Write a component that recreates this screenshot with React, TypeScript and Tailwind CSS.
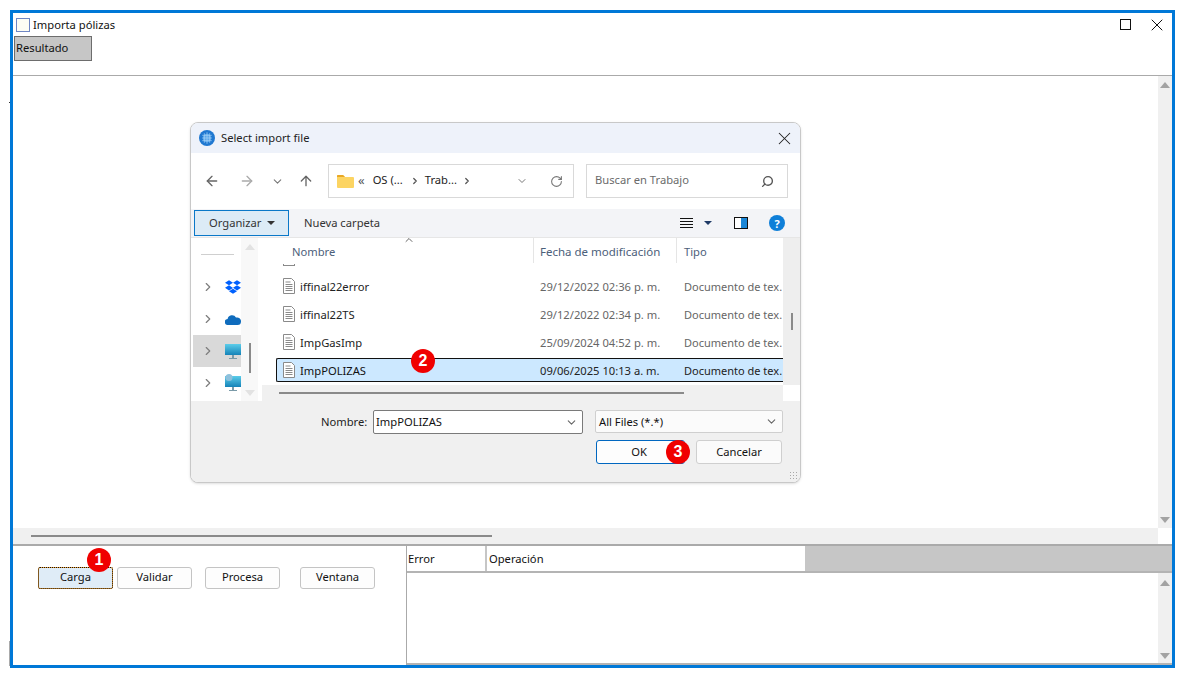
import { ArrowLeft, ArrowRight, ArrowUp, ChevronDown, ChevronRight, ChevronUp, RotateCw, Search, X } from "lucide-react";
import { FaDropbox } from "react-icons/fa";

const files = [
  { name: "iffinal22error", date: "29/12/2022 02:36 p. m." },
  { name: "iffinal22TS", date: "29/12/2022 02:34 p. m." },
  { name: "ImpGasImp", date: "25/09/2024 04:52 p. m." },
];

function Badge({ n, className }: { n: number; className: string }) {
  return (
    <div className={`absolute w-6 h-6 rounded-full bg-[#f00000] text-white text-[16px] font-bold flex items-center justify-center font-['Liberation_Sans',sans-serif] ${className}`}>
      {n}
    </div>
  );
}

function UpTri({ faint }: { faint?: boolean }) {
  return <div className={`w-0 h-0 border-x-[5px] border-x-transparent border-b-[6px] ${faint ? "border-b-[#e2e2e2]" : "border-b-[#a3a3a3]"}`} />;
}

function DownTri({ faint }: { faint?: boolean }) {
  return <div className={`w-0 h-0 border-x-[5px] border-x-transparent border-t-[6px] ${faint ? "border-t-[#e2e2e2]" : "border-t-[#a3a3a3]"}`} />;
}

function DocIcon() {
  return (
    <svg width="14" height="16" viewBox="0 0 14 16" className="shrink-0">
      <path d="M1.5.5h8l3 3v12h-11z" fill="#fff" stroke="#8a8a8a" />
      <path d="M3.5 4h5M3.5 6.5h7M3.5 8.5h7M3.5 10.5h7M3.5 12.5h7" stroke="#8a8a8a" />
    </svg>
  );
}

function Monitor({ net }: { net?: boolean }) {
  return (
    <svg width="16" height="18" viewBox="0 0 16 18" className="shrink-0">
      <defs>
        <linearGradient id="screen" x1="0" y1="0" x2="0" y2="1">
          <stop offset="0" stopColor="#5ccdea" />
          <stop offset="1" stopColor="#1583b8" />
        </linearGradient>
      </defs>
      <rect x="0" y="2" width="16" height="11" fill="url(#screen)" />
      <rect x="7" y="13" width="2" height="3" fill="#7a9aa8" />
      <rect x="4" y="16" width="8" height="1" fill="#7a9aa8" />
      {net && <circle cx="4" cy="3.5" r="3.5" fill="#8fc1dc" />}
    </svg>
  );
}

function NavRow({ children, selected }: { children: React.ReactNode; selected?: boolean }) {
  return (
    <div className={`h-8 flex items-center pl-[8px] gap-[10px] ${selected ? "bg-[#d9d9d9]" : ""}`}>
      <ChevronRight className="w-[14px] h-[14px] text-[#7d7d7d] shrink-0" />
      {children}
    </div>
  );
}

function ActionButton({ label, className }: { label: string; className: string }) {
  return (
    <button className={`w-[75px] h-[22px] pb-[2px] rounded-[3px] border border-[#c4c4c4] bg-[#fdfdfd] text-[#111] ${className}`}>
      {label}
    </button>
  );
}

function FileDialog() {
  return (
    <div className="absolute left-[190px] top-[122px] w-[611px] h-[361px] rounded-[8px] border border-[#c8c8c8] bg-white overflow-hidden flex flex-col shadow-sm">
      {/* title */}
      <div className="h-[30px] shrink-0 bg-[#eef2fa] flex items-center pl-[8px] pr-[5px]">
        <svg width="16" height="16" viewBox="0 0 15 15" className="shrink-0">
          <circle cx="7.5" cy="7.5" r="7.5" fill="#1f78d1" />
          <circle cx="7.5" cy="7.5" r="4" fill="#5aa6ea" />
          <path d="M3 5h9M3 7.5h9M3 10h9M5 3v9M7.5 2v11M10 3v9" stroke="#a8d4f7" strokeWidth=".6" />
        </svg>
        <span className="ml-[6px] text-[#222]">Select import file</span>
        <X className="ml-auto w-[21px] h-[21px] text-[#222]" strokeWidth={1.2} />
      </div>

      {/* navigation */}
      <div className="h-[56px] shrink-0 flex items-center pl-[13px] text-[#555]">
        <ArrowLeft className="w-4 h-4 text-[#666]" />
        <ArrowRight className="w-4 h-4 ml-[19px] text-[#aaa]" />
        <ChevronDown className="w-[13px] h-[13px] ml-[16px] text-[#777]" />
        <ArrowUp className="w-4 h-4 ml-[14px] text-[#666]" />
        <div className="ml-[14px] w-[246px] h-[34px] border border-[#d9d9d9] flex items-center pl-2 pb-[2px] text-[#222]">
          <svg width="17" height="14" viewBox="0 0 17 14" className="shrink-0 mt-[2px]">
            <path d="M0 2a1 1 0 0 1 1-1h5l2 2h8a1 1 0 0 1 1 1v9a1 1 0 0 1-1 1H1a1 1 0 0 1-1-1z" fill="#fcd462" />
            <path d="M0 2a1 1 0 0 1 1-1h5l2 2H0z" fill="#e9a825" />
          </svg>
          <span className="ml-1 text-[#555] text-[13px]">«</span>
          <span className="ml-[8px]">OS (...</span>
          <ChevronRight className="w-[10px] h-[10px] ml-[7px] mt-[2px] text-[#555]" strokeWidth={3} />
          <span className="ml-[5px]">Trab...</span>
          <ChevronRight className="w-[10px] h-[10px] ml-[5px] mt-[2px] text-[#555]" strokeWidth={3} />
          <ChevronDown className="w-[12px] h-[12px] ml-auto mt-[2px] text-[#777]" />
          <RotateCw className="w-[13px] h-[13px] ml-[22px] mr-[10px] mt-[2px] text-[#777]" />
        </div>
        <div className="ml-[12px] w-[202px] h-[34px] border border-[#d9d9d9] flex items-center pl-2 pr-[13px] pb-[2px] text-[#6b6b6b]">
          <span>Buscar en Trabajo</span>
          <Search className="ml-auto w-[13px] h-[13px] mt-[2px] -scale-x-100 text-[#555]" strokeWidth={2.5} />
        </div>
      </div>

      {/* toolbar */}
      <div className="h-[29px] shrink-0 bg-[#f3f4f7] flex items-center pl-[3px] pr-[15px] border-b border-[#e6e6e6]">
        <div className="w-[95px] h-[26px] bg-[#dcebf6] border border-[#0a78c8] flex items-center pl-[14px] text-[#333]">
          Organizar
          <div className="ml-[6px] w-0 h-0 border-x-[4px] border-x-transparent border-t-[4px] border-t-[#333]" />
        </div>
        <span className="ml-[15px] text-[#333]">Nueva carpeta</span>
        <div className="ml-auto w-[13px] flex flex-col gap-[2px]">
          <div className="h-px bg-[#111]" />
          <div className="h-px bg-[#111]" />
          <div className="h-px bg-[#111]" />
          <div className="h-px bg-[#111]" />
        </div>
        <div className="ml-[11px] w-0 h-0 border-x-[4px] border-x-transparent border-t-[4px] border-t-[#1f3a66]" />
        <div className="ml-[22px] w-[14px] h-[12px] border border-[#111] flex">
          <div className="w-1/2 bg-white" />
          <div className="w-1/2 bg-[#1b87d8]" />
        </div>
        <div className="ml-[21px] w-4 h-4 rounded-full bg-[#0f7fd8] text-white text-[11px] font-bold flex items-center justify-center">?</div>
      </div>

      {/* body */}
      <div className="h-[163px] shrink-0 flex">
        <div className="w-[50px] shrink-0 pl-[2px] overflow-hidden">
          <div className="w-[48px] h-[33px] relative">
            <div className="absolute left-[8px] top-[16px] w-[33px] h-px bg-[#cfcfcf]" />
          </div>
          <NavRow><FaDropbox className="w-4 h-4 text-[#0061fe] shrink-0" /></NavRow>
          <NavRow>
            <svg width="16" height="11" viewBox="0 0 16 11" className="shrink-0">
              <path d="M3 11a3 3 0 0 1-.4-6A4.5 4.5 0 0 1 11 3.6 3.8 3.8 0 0 1 16 7.5 3.5 3.5 0 0 1 12.5 11z" fill="#0f6cbd" />
            </svg>
          </NavRow>
          <NavRow selected><Monitor /></NavRow>
          <NavRow><Monitor net /></NavRow>
        </div>
        <div className="w-[17px] shrink-0 bg-[#f8f8f8] flex flex-col items-center pt-[6px] pb-[5px]">
          <UpTri faint />
          <div className="w-[2px] h-[30px] bg-[#8a8a8a] mt-[93px]" />
          <div className="mt-auto"><DownTri faint /></div>
        </div>
        <div className="w-[4px] shrink-0" />
        <div className="w-[521px] shrink-0 flex flex-col">
          <div className="h-[25px] flex shrink-0 relative text-[#4c607a]">
            <div className="w-[272px] pl-[30px] pt-[2px] flex items-center border-r border-[#e5e5e5]">Nombre</div>
            <ChevronUp className="absolute left-[141px] -top-[4px] w-[12px] h-[12px] text-[#666]" />
            <div className="w-[143px] pl-[6px] pt-[2px] flex items-center border-r border-[#e5e5e5] text-[11.5px]">Fecha de modificación</div>
            <div className="pl-[7px] pt-[2px] flex items-center">Tipo</div>
          </div>
          <div className="h-[9px] pl-[21px] overflow-hidden shrink-0">
            <div className="w-[12px] h-[2px] mt-[1px] border-x border-b border-[#8a8a8a]" />
          </div>
          {files.map((f) => (
            <div key={f.name} className="h-[28px] flex items-center shrink-0">
              <div className="w-[20px] shrink-0" />
              <DocIcon />
              <span className="ml-[4px] w-[240px] pt-[1px] text-[#222]">{f.name}</span>
              <span className="w-[144px] pt-[1px] text-[#666]">{f.date}</span>
              <span className="text-[#666] whitespace-nowrap text-[11px]">Documento de tex.</span>
            </div>
          ))}
          <div className="h-[24px] mt-[2px] ml-[14px] flex items-center shrink-0 bg-[#cce8ff] border-y border-l border-[#111] rounded-l-[2px]">
            <div className="w-[5px] shrink-0" />
            <DocIcon />
            <span className="ml-[4px] w-[240px] pt-[1px] text-[#111]">ImpPOLIZAS</span>
            <span className="w-[144px] pt-[1px] text-[#222]">09/06/2025 10:13 a. m.</span>
            <span className="text-[#222] whitespace-nowrap text-[11px]">Documento de tex.</span>
          </div>
          <div className="h-[16px] mt-[3px] shrink-0 bg-[#f0f0f0] pl-[17px] pt-[7px]">
            <div className="w-[405px] h-[2px] bg-[#8a8a8a]" />
          </div>
        </div>
        <div className="w-[17px] shrink-0 bg-[#eeeeee] self-start h-[147px] flex justify-center pt-[75px]">
          <div className="w-[2px] h-[17px] bg-[#8a8a8a]" />
        </div>
      </div>

      {/* footer */}
      <div className="flex-1 bg-[#f0f0f0] relative pt-[9px]">
        <div className="flex items-start pl-[130px]">
          <span className="w-[47px] h-[24px] flex items-center text-[#222]">Nombre:</span>
          <div className="ml-[5px] w-[210px] h-[24px] bg-white border border-[#7a7a7a] rounded-[2px] flex items-center pl-[2px] pr-[4px] text-[#111]">
            ImpPOLIZAS
            <ChevronDown className="ml-auto w-[13px] h-[13px] text-[#666]" />
          </div>
          <div className="ml-[12px] w-[188px] h-[23px] bg-[#fbfbfb] border border-[#cfcfcf] rounded-[2px] flex items-center pl-[3px] pr-[4px] text-[#111]">
            All Files (*.*)
            <ChevronDown className="ml-auto w-[13px] h-[13px] text-[#666]" />
          </div>
        </div>
        <div className="flex mt-[6px] pl-[405px] gap-[11px]">
          <button className="w-[89px] h-[24px] pr-[3px] rounded-[3px] border border-[#0067c0] bg-[#fdfdfd] text-[#111]">OK</button>
          <button className="w-[86px] h-[24px] rounded-[3px] border border-[#cfcfcf] bg-[#fbfbfb] text-[#111]">Cancelar</button>
        </div>
        <div className="absolute right-[3px] bottom-[3px] w-[8px] h-[8px] bg-[radial-gradient(#a8a8a8_1px,transparent_1px)] bg-[length:3px_3px]" />
      </div>
    </div>
  );
}

export default function App() {
  return (
    <div className="relative w-[1189px] h-[682px] bg-white pt-[10px] pl-[10px] overflow-hidden font-['Noto_Sans',sans-serif] text-[11.2px] leading-none text-[#111]">
      <div className="w-[1165px] h-[658px] border-[3px] border-[#0078d7] flex flex-col">
        <div className="h-[23px] shrink-0 flex items-center pl-[3px] pr-[5px]">
          <div className="w-[14px] h-[14px] border border-[#6f86c4] bg-[#fdfdf4]" />
          <span className="ml-[3px] text-[#111]">Importa pólizas</span>
          <div className="ml-auto w-[11px] h-[11px] border border-[#111]" />
          <X className="ml-[16px] w-[20px] h-[20px] text-[#111]" strokeWidth={1.2} />
        </div>
        <div className="h-[40px] shrink-0 border-b border-[#aaaaaa] pl-px">
          <div className="w-[78px] h-[25px] bg-[#c6c6c6] border border-[#6d6d6d] pl-px pt-[5px]">Resultado</div>
        </div>

        <div className="h-[468px] shrink-0 flex">
          <div className="w-[1145px] shrink-0 flex flex-col">
            <div className="flex-1" />
            <div className="h-[16px] bg-[#f0f0f0] pl-[18px] pt-[7px]">
              <div className="w-[461px] h-[2px] bg-[#8a8a8a]" />
            </div>
          </div>
          <div className="w-[14px] h-[452px] bg-[#f0f0f0] flex flex-col items-center justify-between pt-[6px] pb-[5px]">
            <UpTri />
            <DownTri />
          </div>
        </div>

        <div className="h-[2px] shrink-0 bg-[#aaaaaa]" />

        <div className="flex-1 flex min-h-0">
          <div className="w-[394px] shrink-0 border-r border-[#aaaaaa] flex items-start pt-[21px] pl-[25px]">
            <button className="w-[75px] h-[22px] pb-[2px] rounded-[2px] bg-[#dfecf7] border border-[#f0a030] outline outline-dotted outline-[#111] -outline-offset-1 text-[#111]">Carga</button>
            <ActionButton label="Validar" className="ml-[4px]" />
            <ActionButton label="Procesa" className="ml-[13px]" />
            <ActionButton label="Ventana" className="ml-[20px]" />
          </div>
          <div className="flex-1 flex flex-col">
            <div className="h-[27px] shrink-0 flex bg-[#c6c6c6] border-b-2 border-[#b4b4b4]">
              <div className="w-[80px] bg-white flex items-center pl-px border-r-2 border-[#c6c6c6]">Error</div>
              <div className="w-[318px] bg-white flex items-center pl-[2px]">Operación</div>
            </div>
            <div className="flex-1 flex border-b-2 border-[#b4b4b4]">
              <div className="flex-1" />
              <div className="w-[14px] bg-[#f0f0f0] flex flex-col items-center justify-between pt-[7px] pb-[4px]">
                <UpTri />
                <DownTri />
              </div>
            </div>
          </div>
        </div>
      </div>

      <FileDialog />

      <Badge n={1} className="left-[87px] top-[548px]" />
      <Badge n={2} className="left-[411px] top-[349px]" />
      <Badge n={3} className="left-[666px] top-[440px]" />

      {/* stray marks left of the window */}
      <div className="absolute left-[9px] top-[102px] w-px h-px bg-[#333]" />
      <div className="absolute left-[9px] top-[641px] w-px h-[25px] bg-[#aaaaaa]" />
    </div>
  );
}
